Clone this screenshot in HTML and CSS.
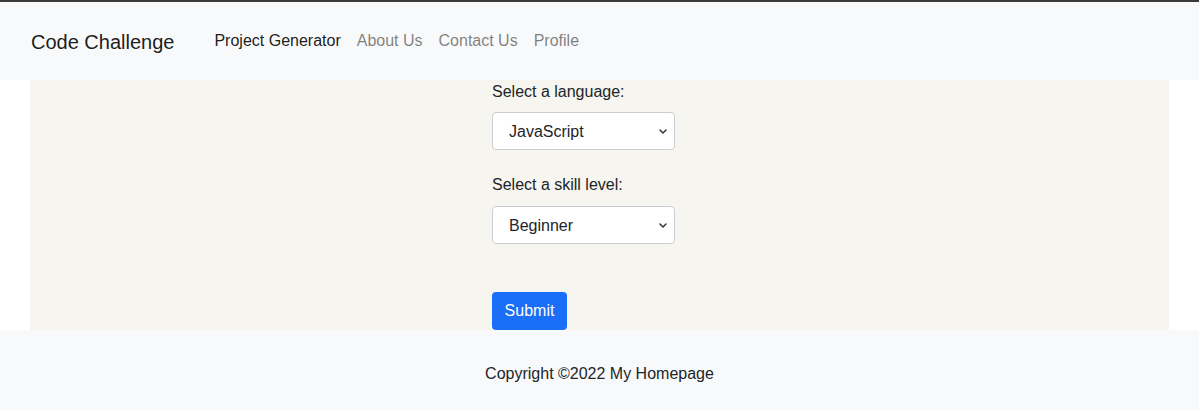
FILE: index.html
```html
<!DOCTYPE html>
<html lang="en">
<head>
<meta charset="utf-8">
<title>Code Challenge</title>
<link rel="stylesheet" href="styles.css">
</head>
<body>
<nav class="navbar">
  <a class="brand" href="#">Code Challenge</a>
  <ul class="nav-links">
    <li><a class="nav-link active" href="#">Project Generator</a></li>
    <li><a class="nav-link" href="#">About Us</a></li>
    <li><a class="nav-link" href="#">Contact Us</a></li>
    <li><a class="nav-link" href="#">Profile</a></li>
  </ul>
</nav>
<main class="content">
  <form class="form">
    <label class="label" for="lang">Select a language:</label>
    <div class="select-wrap">
      <select id="lang" class="select">
        <option>JavaScript</option>
        <option>Python</option>
        <option>Java</option>
      </select>
      <svg class="chev" width="8" height="5" viewBox="0 0 8 5"><path d="M1 1l3 3 3-3" fill="none" stroke="#333" stroke-width="1.5" stroke-linecap="round" stroke-linejoin="round"/></svg>
    </div>
    <label class="label label-2" for="lvl">Select a skill level:</label>
    <div class="select-wrap">
      <select id="lvl" class="select">
        <option>Beginner</option>
        <option>Intermediate</option>
        <option>Advanced</option>
      </select>
      <svg class="chev" width="8" height="5" viewBox="0 0 8 5"><path d="M1 1l3 3 3-3" fill="none" stroke="#333" stroke-width="1.5" stroke-linecap="round" stroke-linejoin="round"/></svg>
    </div>
    <button type="button" class="btn">Submit</button>
  </form>
</main>
<footer class="footer">Copyright ©2022 My Homepage</footer>
</body>
</html>
```

FILE: styles.css
```css
html, body {
  margin: 0;
  padding: 0;
}
body {
  font-family: "Liberation Sans", Arial, sans-serif;
  font-size: 16px;
  line-height: 24px;
  color: #212529;
  background: #ffffff;
  border-top: 2px solid #3a3a3a;
}
a { text-decoration: none; }
.navbar {
  height: 78px;
  background: #f8f9fa;
  display: flex;
  align-items: center;
  padding: 0 0 0 31px;
  box-sizing: border-box;
}
.brand {
  font-size: 20px;
  line-height: 30px;
  color: rgba(0, 0, 0, 0.9);
  margin-right: 32px;
  margin-top: 1px;
}
.nav-links {
  list-style: none;
  margin: 0;
  padding: 0;
  display: flex;
}
.nav-link {
  display: block;
  padding: 0 8px;
  color: rgba(0, 0, 0, 0.5);
}
.nav-link.active { color: rgba(0, 0, 0, 0.9); }
.content {
  margin: 0 30px;
  background: #f6f5ef;
  height: 250px;
  display: flex;
  justify-content: center;
}
.form {
  width: 215px;
  display: flex;
  flex-direction: column;
  align-items: flex-start;
}
.label {
  display: block;
  margin-bottom: 8px;
}
.label-2 { margin-top: 23px; margin-bottom: 9px; }
.select-wrap {
  position: relative;
  width: 183px;
}
.select {
  appearance: none;
  -webkit-appearance: none;
  width: 183px;
  height: 38px;
  box-sizing: border-box;
  border: 1px solid #cdcdcd;
  border-radius: 4px;
  background: #ffffff;
  font-family: "Liberation Sans", Arial, sans-serif;
  font-size: 16px;
  color: #212529;
  padding: 0 30px 0 16px;
  margin: 0;
}
.chev {
  position: absolute;
  right: 8px;
  top: 17px;
  pointer-events: none;
}
.btn {
  margin-top: 48px;
  height: 38px;
  width: 75px;
  border: none;
  border-radius: 4px;
  background: #1a6ef8;
  color: #ffffff;
  font-family: "Liberation Sans", Arial, sans-serif;
  font-size: 16px;
  padding: 0;
}
.footer {
  background: #f8f9fa;
  height: 80px;
  box-sizing: border-box;
  padding-top: 32px;
  text-align: center;
  color: #212529;
}
```
